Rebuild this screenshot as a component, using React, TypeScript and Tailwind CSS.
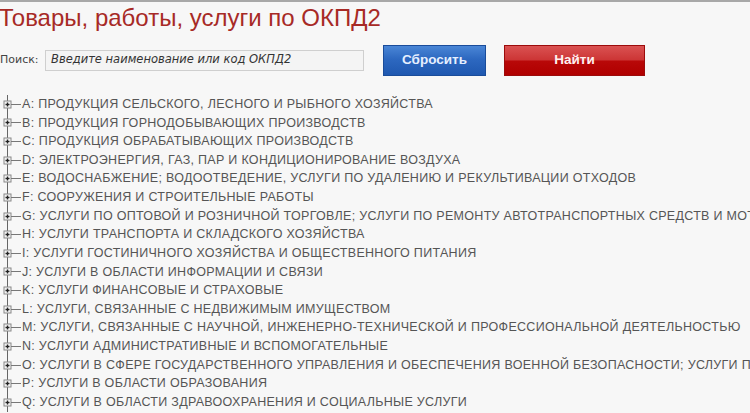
import React from "react";

const rows = [
  "A: ПРОДУКЦИЯ СЕЛЬСКОГО, ЛЕСНОГО И РЫБНОГО ХОЗЯЙСТВА",
  "B: ПРОДУКЦИЯ ГОРНОДОБЫВАЮЩИХ ПРОИЗВОДСТВ",
  "C: ПРОДУКЦИЯ ОБРАБАТЫВАЮЩИХ ПРОИЗВОДСТВ",
  "D: ЭЛЕКТРОЭНЕРГИЯ, ГАЗ, ПАР И КОНДИЦИОНИРОВАНИЕ ВОЗДУХА",
  "E: ВОДОСНАБЖЕНИЕ; ВОДООТВЕДЕНИЕ, УСЛУГИ ПО УДАЛЕНИЮ И РЕКУЛЬТИВАЦИИ ОТХОДОВ",
  "F: СООРУЖЕНИЯ И СТРОИТЕЛЬНЫЕ РАБОТЫ",
  "G: УСЛУГИ ПО ОПТОВОЙ И РОЗНИЧНОЙ ТОРГОВЛЕ; УСЛУГИ ПО РЕМОНТУ АВТОТРАНСПОРТНЫХ СРЕДСТВ И МОТОЦИКЛОВ",
  "H: УСЛУГИ ТРАНСПОРТА И СКЛАДСКОГО ХОЗЯЙСТВА",
  "I: УСЛУГИ ГОСТИНИЧНОГО ХОЗЯЙСТВА И ОБЩЕСТВЕННОГО ПИТАНИЯ",
  "J: УСЛУГИ В ОБЛАСТИ ИНФОРМАЦИИ И СВЯЗИ",
  "K: УСЛУГИ ФИНАНСОВЫЕ И СТРАХОВЫЕ",
  "L: УСЛУГИ, СВЯЗАННЫЕ С НЕДВИЖИМЫМ ИМУЩЕСТВОМ",
  "M: УСЛУГИ, СВЯЗАННЫЕ С НАУЧНОЙ, ИНЖЕНЕРНО-ТЕХНИЧЕСКОЙ И ПРОФЕССИОНАЛЬНОЙ ДЕЯТЕЛЬНОСТЬЮ",
  "N: УСЛУГИ АДМИНИСТРАТИВНЫЕ И ВСПОМОГАТЕЛЬНЫЕ",
  "O: УСЛУГИ В СФЕРЕ ГОСУДАРСТВЕННОГО УПРАВЛЕНИЯ И ОБЕСПЕЧЕНИЯ ВОЕННОЙ БЕЗОПАСНОСТИ; УСЛУГИ ПО ОБЯЗАТЕЛЬНОМУ СОЦИАЛЬНОМУ ОБЕСПЕЧЕНИЮ",
  "P: УСЛУГИ В ОБЛАСТИ ОБРАЗОВАНИЯ",
  "Q: УСЛУГИ В ОБЛАСТИ ЗДРАВООХРАНЕНИЯ И СОЦИАЛЬНЫЕ УСЛУГИ",
];

function TreeIcon() {
  return (
    <svg width="22" height="19" viewBox="0 0 22 19" className="shrink-0">
      <line x1="7.5" y1="0" x2="7.5" y2="19" stroke="#666" strokeWidth="1" />
      <rect x="4" y="6" width="7" height="7" fill="#f4f4f4" stroke="#888" strokeWidth="1" />
      <line x1="5.5" y1="9.5" x2="9.5" y2="9.5" stroke="#222" strokeWidth="1.4" />
      <line x1="7.5" y1="7.5" x2="7.5" y2="11.5" stroke="#222" strokeWidth="1.4" />
      <line x1="11" y1="9.5" x2="21" y2="9.5" stroke="#777" strokeWidth="1" />
    </svg>
  );
}

export default function App() {
  return (
    <div className="w-[750px] h-[413px] overflow-hidden bg-[#f7f7f7] border-t-2 border-[#a8a8a8] font-['Liberation_Sans',Arial,sans-serif]">
      <h1 className="text-[24px] leading-[30px] text-[#a72a26] mt-[1px] -ml-[1px] whitespace-nowrap">
        Товары, работы, услуги по ОКПД2
      </h1>
      <div className="flex items-center mt-[11px] h-[32px]">
        <span className="text-[11px] text-[#444] w-[45px] font-['DejaVu_Sans',sans-serif]">Поиск:</span>
        <div className="w-[319px] h-[21px] border border-[#cfcfcf] bg-[#f4f4f4] flex items-center pl-[5px] text-[11.5px] italic text-[#333] font-['DejaVu_Sans',sans-serif]">
          Введите наименование или код ОКПД2
        </div>
        <button className="ml-[19px] w-[103px] h-[31px] bg-[linear-gradient(to_bottom,#4a86d6_0%,#2d68c0_45%,#1f58b0_100%)] text-[#e6efff] font-bold text-[13.5px] border border-[#1a4c9a]">
          Сбросить
        </button>
        <button className="ml-[18px] w-[141px] h-[31px] bg-[linear-gradient(to_bottom,#da5252_0%,#cc3535_48%,#b80808_52%,#b00000_100%)] text-[#fff0f0] font-bold text-[13.5px] border border-[#9c0b0b]">
          Найти
        </button>
      </div>
      <div className="mt-[19px]">
        {rows.map((r) => (
          <div key={r} className="flex items-center h-[18.625px] whitespace-nowrap">
            <TreeIcon />
            <span className="text-[12.5px] text-[#555] tracking-[0.3px]">{r}</span>
          </div>
        ))}
      </div>
    </div>
  );
}
